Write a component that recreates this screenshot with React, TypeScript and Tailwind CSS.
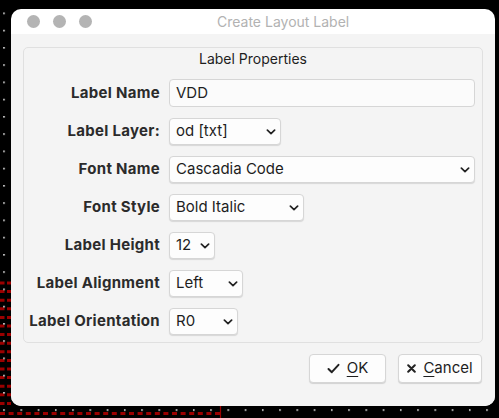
import { ReactNode } from "react";

const Chevron = () => (
  <svg width="10" height="6" viewBox="0 0 10 6" className="shrink-0">
    <path d="M1.4 1.2 L5 4.6 L8.6 1.2" fill="none" stroke="#222" strokeWidth="1.7" strokeLinecap="round" strokeLinejoin="round" />
  </svg>
);

const Select = ({ value, width }: { value: string; width: string }) => (
  <div
    className={`${width} h-[27px] flex items-center justify-between pl-[6px] pr-[4px] bg-[#fdfdfd] border border-[#d6d6d6] rounded-[4px] shadow-[0_1px_1px_rgba(0,0,0,0.12)] text-[15px] text-[#1e1e1e]`}
  >
    <span>{value}</span>
    <Chevron />
  </div>
);

const Row = ({ label, children }: { label: string; children: ReactNode }) => (
  <div className="flex items-center">
    <div className="w-[136px] text-right font-bold text-[15px] tracking-[0.3px] text-[#2b2b2b]">{label}</div>
    <div className="ml-[9px] flex-1 flex">{children}</div>
  </div>
);

const Backdrop = () => {
  const rows = Array.from({ length: 15 }, (_, i) => 283 + i * 8.6);
  return (
    <svg className="absolute inset-0" width="499" height="418">
      <defs>
        <pattern id="dots" x="3.2" y="12.5" width="17.25" height="17.25" patternUnits="userSpaceOnUse">
          <rect x="0" y="0" width="1.6" height="1.6" fill="#e8e8e8" />
        </pattern>
      </defs>
      {rows.map((y) => (
        <line key={y} x1="0" y1={y} x2="11" y2={y} stroke="#9a0000" strokeWidth="3" strokeDasharray="4.5 2.5" />
      ))}
      <line x1="0" y1="413.5" x2="220" y2="413.5" stroke="#9a0000" strokeWidth="3" strokeDasharray="5 3.6" />
      <line x1="220.5" y1="406" x2="220.5" y2="418" stroke="#9a0000" strokeWidth="1.2" />
      <rect x="0" y="0" width="499" height="418" fill="url(#dots)" />
    </svg>
  );
};

export default function App() {
  return (
    <div className="relative w-[499px] h-[418px] bg-black overflow-hidden font-['Inter',sans-serif]">
      <Backdrop />
      <div className="relative pl-[11px] pt-[9px]">
        <div className="w-[484px] h-[397px] rounded-[10px] bg-white overflow-hidden flex flex-col">
          <div className="h-[25px] flex items-center pl-[16px]">
            <div className="flex gap-[13px]">
              <span className="w-[13px] h-[13px] rounded-full bg-[#b4b4b4]" />
              <span className="w-[13px] h-[13px] rounded-full bg-[#b4b4b4]" />
              <span className="w-[13px] h-[13px] rounded-full bg-[#b4b4b4]" />
            </div>
            <span className="ml-[125px] text-[14px] text-[#b2b2b2]">Create Layout Label</span>
          </div>
          <div className="flex-1 bg-[#f4f4f4] px-[12px] pt-[13px] flex flex-col">
            <div className="h-[296px] border border-[#e0e0e0] rounded-[5px] pt-[2px] pr-[7px]">
              <div className="text-center text-[14px] leading-[18px] text-[#1e1e1e] pl-[7px]">Label Properties</div>
              <div className="mt-[11px] flex flex-col gap-[11px]">
                <Row label="Label Name">
                  <div className="flex-1 h-[28px] flex items-center pl-[6px] bg-[#fbfbfb] border border-[#d6d6d6] rounded-[4px] text-[15px] text-[#1e1e1e]">
                    VDD
                  </div>
                </Row>
                <Row label="Label Layer:">
                  <Select value="od [txt]" width="w-[112px]" />
                </Row>
                <Row label="Font Name">
                  <Select value="Cascadia Code" width="w-[306px]" />
                </Row>
                <Row label="Font Style">
                  <Select value="Bold Italic" width="w-[135px]" />
                </Row>
                <Row label="Label Height">
                  <Select value="12" width="w-[46px]" />
                </Row>
                <Row label="Label Alignment">
                  <Select value="Left" width="w-[74px]" />
                </Row>
                <Row label="Label Orientation">
                  <Select value="R0" width="w-[69px]" />
                </Row>
              </div>
            </div>
            <div className="mt-[11px] flex justify-end gap-[12px] pr-[1px]">
              <div className="w-[77px] h-[29px] flex items-center justify-center gap-[7px] bg-[#fdfdfd] border border-[#d6d6d6] rounded-[4px] shadow-[0_1px_1px_rgba(0,0,0,0.14)] text-[15px] text-[#1e1e1e]">
                <svg width="13" height="11" viewBox="0 0 13 11">
                  <path d="M1.5 6 L4.8 9.2 L11.5 1.8" fill="none" stroke="#222" strokeWidth="2" strokeLinecap="round" strokeLinejoin="round" />
                </svg>
                <span>
                  <span className="underline underline-offset-[3px]">O</span>K
                </span>
              </div>
              <div className="w-[84px] h-[29px] flex items-center justify-center gap-[7px] bg-[#fdfdfd] border border-[#d6d6d6] rounded-[4px] shadow-[0_1px_1px_rgba(0,0,0,0.14)] text-[15px] text-[#1e1e1e]">
                <svg width="9" height="9" viewBox="0 0 9 9">
                  <path d="M1.2 1.2 L7.8 7.8 M7.8 1.2 L1.2 7.8" fill="none" stroke="#222" strokeWidth="2" strokeLinecap="round" />
                </svg>
                <span>
                  <span className="underline underline-offset-[3px]">C</span>ancel
                </span>
              </div>
            </div>
          </div>
        </div>
      </div>
    </div>
  );
}
